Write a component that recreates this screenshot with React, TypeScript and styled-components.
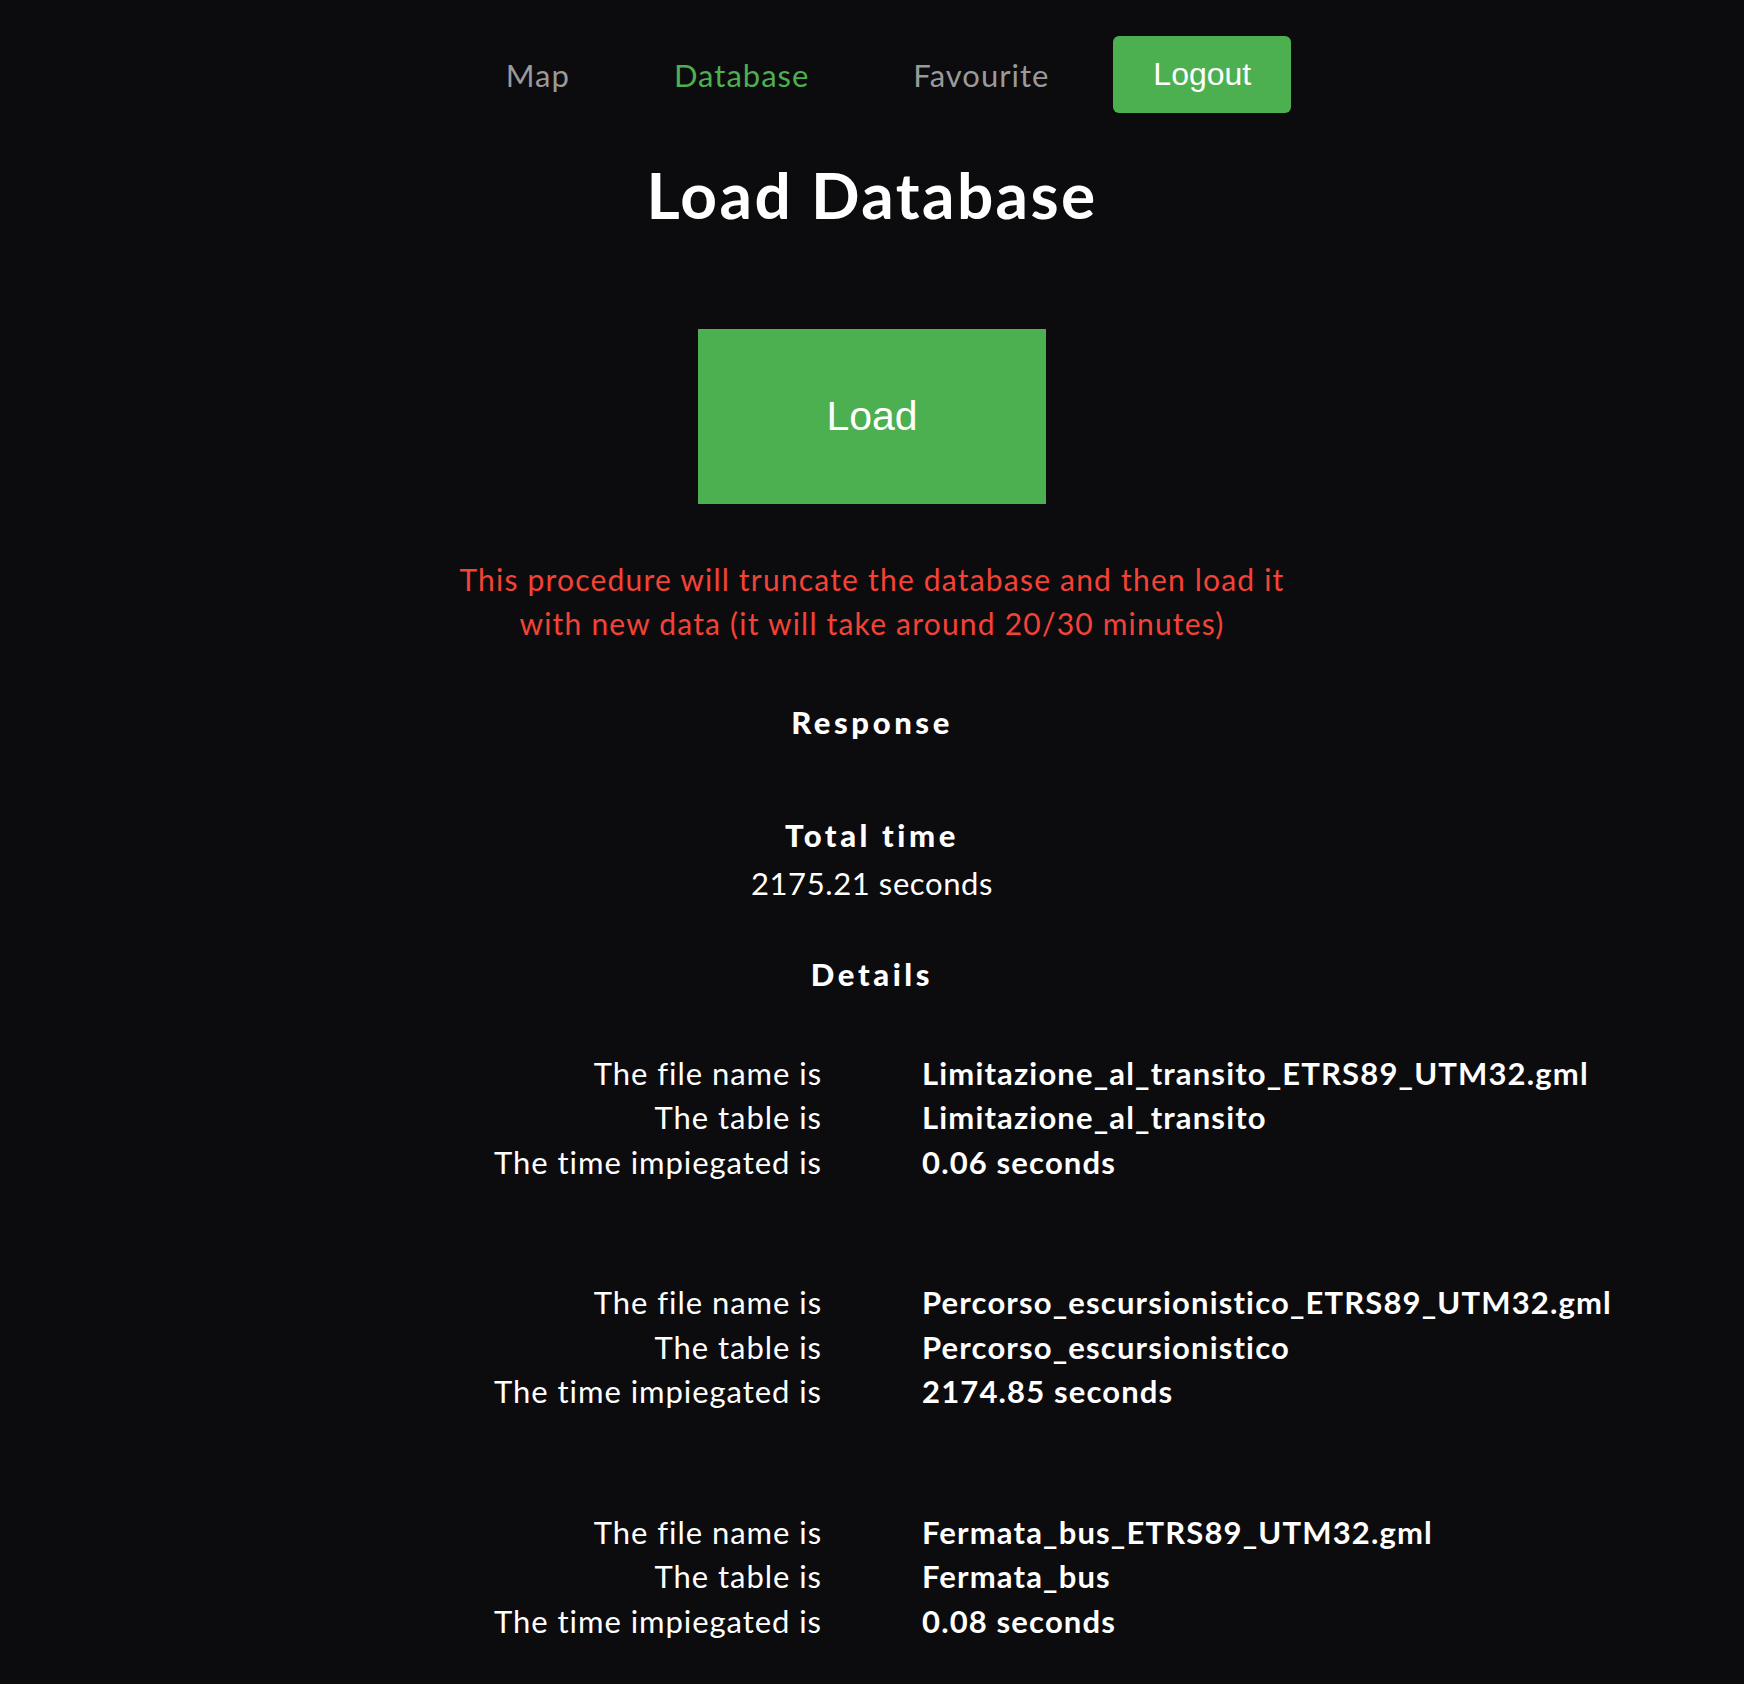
import React from "react";
import styled, { createGlobalStyle } from "styled-components";

const Global = createGlobalStyle`
  html, body { margin: 0; padding: 0; background: #0c0b0d; }
  body { font-family: Lato, "Noto Sans", sans-serif; color: #ffffff; }
`;

const Page = styled.div`
  min-height: 1684px;
  display: flex;
  flex-direction: column;
  align-items: center;
`;

const Nav = styled.nav`
  display: flex;
  align-items: center;
  gap: 24px;
  margin-top: 36px;
  padding-left: 13px;
`;

const NavLink = styled.a<{ $active?: boolean }>`
  font-size: 31px;
  letter-spacing: 1px;
  color: ${(p) => (p.$active ? "#4caf50" : "#9a9a9a")};
  padding: 0 40px;
  text-decoration: none;
`;

const LogoutButton = styled.button`
  height: 77px;
  padding: 0 40px;
  background: #4caf50;
  border: none;
  border-radius: 6px;
  color: #ffffff;
  font-family: "Liberation Sans", Arial, sans-serif;
  font-size: 32px;
`;

const Title = styled.h1`
  margin: 44px 0 0;
  font-size: 64px;
  line-height: 1.2;
  font-weight: 700;
  letter-spacing: 2.4px;
`;

const LoadButton = styled.button`
  margin-top: 95px;
  width: 348px;
  height: 175px;
  background: #4caf50;
  border: none;
  color: #ffffff;
  font-family: "Liberation Sans", Arial, sans-serif;
  font-size: 41px;
`;

const Warning = styled.p`
  margin: 53px 0 0;
  max-width: 860px;
  text-align: center;
  color: #f44336;
  font-size: 30px;
  letter-spacing: 1.2px;
  line-height: 44px;
`;

const Heading = styled.h3<{ $top: number }>`
  margin: ${(p) => p.$top}px 0 0;
  font-size: 31px;
  line-height: 35px;
  font-weight: 900;
  letter-spacing: 3.6px;
`;

const TotalValue = styled.div`
  margin-top: 8px;
  font-size: 31px;
  letter-spacing: 0.6px;
  line-height: 45px;
`;

const Details = styled.div`
  margin-top: 59px;
  width: 100%;
  display: flex;
  flex-direction: column;
  gap: 96px;
`;

const Group = styled.div`
  display: grid;
  grid-template-columns: 1fr 1fr;
  column-gap: 100px;
  font-size: 31px;
  line-height: 44.5px;
`;

const Label = styled.div`
  text-align: right;
  letter-spacing: 0.95px;
`;

const Value = styled.div`
  font-weight: 700;
  letter-spacing: 1.15px;
`;

const rows = [
  {
    file: "Limitazione_al_transito_ETRS89_UTM32.gml",
    table: "Limitazione_al_transito",
    time: "0.06 seconds",
  },
  {
    file: "Percorso_escursionistico_ETRS89_UTM32.gml",
    table: "Percorso_escursionistico",
    time: "2174.85 seconds",
  },
  {
    file: "Fermata_bus_ETRS89_UTM32.gml",
    table: "Fermata_bus",
    time: "0.08 seconds",
  },
];

export default function App() {
  return (
    <>
      <Global />
      <Page>
        <Nav>
          <NavLink>Map</NavLink>
          <NavLink $active>Database</NavLink>
          <NavLink>Favourite</NavLink>
          <LogoutButton>Logout</LogoutButton>
        </Nav>
        <Title>Load Database</Title>
        <LoadButton>Load</LoadButton>
        <Warning>
          This procedure will truncate the database and then load it with new
          data (it will take around 20/30 minutes)
        </Warning>
        <Heading $top={60}>Response</Heading>
        <Heading $top={78}>Total time</Heading>
        <TotalValue>2175.21 seconds</TotalValue>
        <Heading $top={51}>Details</Heading>
        <Details>
          {rows.map((r) => (
            <Group key={r.file}>
              <Label>The file name is</Label>
              <Value>{r.file}</Value>
              <Label>The table is</Label>
              <Value>{r.table}</Value>
              <Label>The time impiegated is</Label>
              <Value>{r.time}</Value>
            </Group>
          ))}
        </Details>
      </Page>
    </>
  );
}
